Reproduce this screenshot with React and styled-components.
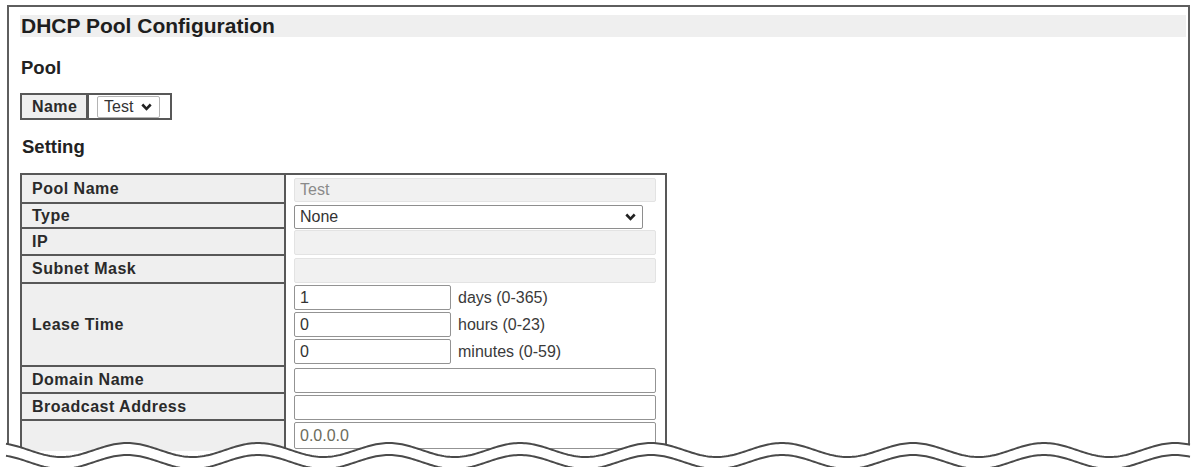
import React from 'react';
import styled, { createGlobalStyle } from 'styled-components';

const GlobalStyle = createGlobalStyle`
  html, body {
    margin: 0;
    padding: 0;
    height: 467px;
    overflow: hidden;
    background: #fff;
  }
  body {
    font-family: "Liberation Sans", Arial, sans-serif;
    color: #2a2a2a;
  }
`;

const palette = {
  line: '#585858',
  shade: '#efefef',
  text: '#2a2a2a',
};

const Page = styled.div`
  position: relative;
  height: 467px;
  overflow: hidden;
`;

const Frame = styled.div`
  box-sizing: border-box;
  width: 1183px;
  height: 480px;
  margin: 5px 0 0 7px;
  border: 2px solid #5e5e5e;
  padding: 8px 2px 0 11px;
`;

const TitleBar = styled.div`
  height: 22px;
  line-height: 22px;
  background: ${palette.shade};
  font-size: 21px;
  font-weight: bold;
  color: #1e1e1e;
  padding-left: 1px;
`;

const Heading = styled.div`
  margin-top: ${p => p.$top}px;
  font-size: 18.5px;
  line-height: 24px;
  font-weight: bold;
  color: #222;
  padding-left: ${p => p.$indent || 1}px;
`;

const NameTable = styled.div`
  display: inline-flex;
  box-sizing: border-box;
  height: 27px;
  margin-top: 13px;
  border: 2px solid ${palette.line};
`;

const NameLabel = styled.div`
  display: flex;
  align-items: center;
  width: 67px;
  box-sizing: border-box;
  padding-left: 10px;
  background: ${palette.shade};
  border-right: 3px solid ${palette.line};
  font-size: 16px;
  font-weight: bold;
  letter-spacing: 0.4px;
`;

const NameValue = styled.div`
  display: flex;
  align-items: center;
  padding: 0 10px 0 8px;
  background: #fff;
`;

const SelectWrap = styled.div`
  position: relative;
  width: ${p => p.$w}px;
  height: ${p => p.$h}px;
`;

const NativeSelect = styled.select`
  appearance: none;
  -webkit-appearance: none;
  box-sizing: border-box;
  width: 100%;
  height: 100%;
  margin: 0;
  padding: 0 0 0 ${p => p.$pad}px;
  border: 1px solid ${p => p.$border};
  border-radius: 2px;
  background: #fff;
  font-family: "Liberation Sans", Arial, sans-serif;
  font-size: 16px;
  color: #333;
  outline: none;
`;

const Chevron = styled.svg`
  position: absolute;
  right: ${p => p.$right}px;
  top: 50%;
  transform: translateY(-50%);
  pointer-events: none;
`;

const SettingTable = styled.div`
  box-sizing: border-box;
  width: 647px;
  margin-top: 14px;
  border: 2px solid ${palette.line};
  border-bottom: none;
`;

const Row = styled.div`
  display: flex;
  height: ${p => p.$h}px;
`;

const Label = styled.div`
  display: flex;
  align-items: center;
  box-sizing: border-box;
  width: 264px;
  padding-left: 10px;
  background: ${palette.shade};
  border-right: 2px solid ${palette.line};
  border-bottom: ${p => (p.$last ? 'none' : `2px solid ${palette.line}`)};
  font-size: 16px;
  font-weight: bold;
  letter-spacing: 0.5px;
  color: ${palette.text};
`;

const Value = styled.div`
  flex: 1;
  display: flex;
  flex-direction: column;
  justify-content: ${p => (p.$top ? 'flex-start' : 'center')};
  gap: 2px;
  padding: ${p => (p.$top ? '1px' : '0')} 9px 0 8px;
`;

const Line = styled.div`
  display: flex;
  align-items: center;
`;

const Field = styled.input`
  box-sizing: border-box;
  width: ${p => (p.$w ? `${p.$w}px` : '100%')};
  height: ${p => p.$h || 25}px;
  margin: 0;
  padding: 0 5px;
  border: 1px solid #939393;
  border-radius: 2px;
  background: #fff;
  font-family: "Liberation Sans", Arial, sans-serif;
  font-size: 16px;
  color: ${p => p.$color || '#333'};
  outline: none;

  &:disabled {
    background: #f1f1f1;
    border-color: #e3e3e3;
    color: #8a8a8a;
  }
`;

const Unit = styled.span`
  margin-left: 7px;
  font-size: 16px;
  color: #3a3a3a;
`;

const Wave = styled.svg`
  position: absolute;
  left: 0;
  top: 436px;
`;

function Select({ w, h, pad, border, right, value }) {
  return (
    <SelectWrap $w={w} $h={h}>
      <NativeSelect $pad={pad} $border={border} defaultValue={value}>
        <option>{value}</option>
      </NativeSelect>
      <Chevron $right={right} width="11" height="8" viewBox="0 0 11 8">
        <path d="M1.3 1.5 L5.5 5.8 L9.7 1.5" fill="none" stroke="#222" strokeWidth="2.6" />
      </Chevron>
    </SelectWrap>
  );
}

function waveLine(offset, x0, x1) {
  const pts = [];
  for (let x = x0; x <= x1; x += 2) {
    const y = offset - 7 * Math.cos((2 * Math.PI * (x - 127)) / 131);
    pts.push(`${x},${y.toFixed(2)}`);
  }
  return pts;
}

function BreakLine() {
  const top = waveLine(14, 6, 1190);
  const second = waveLine(26, 6, 1190);
  const fill = `M0,${top[0].split(',')[1]} L${top.join(' L')} L1195,${top[top.length - 1].split(',')[1]} L1195,40 L0,40 Z`;
  return (
    <Wave width="1195" height="31" viewBox="0 0 1195 31">
      <path d={fill} fill="#fff" />
      <polyline points={top.join(' ')} fill="none" stroke="#4a4a4a" strokeWidth="2" />
      <polyline points={second.join(' ')} fill="none" stroke="#4a4a4a" strokeWidth="2" />
    </Wave>
  );
}

export default function App() {
  return (
    <Page>
      <GlobalStyle />
      <Frame>
        <TitleBar>DHCP Pool Configuration</TitleBar>
        <Heading $top={19}>Pool</Heading>
        <NameTable>
          <NameLabel>Name</NameLabel>
          <NameValue>
            <Select w={63} h={22} pad={6} border="#b4b4b4" right={8} value="Test" />
          </NameValue>
        </NameTable>
        <Heading $top={15} $indent={2}>Setting</Heading>
        <SettingTable>
          <Row $h={29}>
            <Label>Pool Name</Label>
            <Value>
              <Field disabled defaultValue="Test" $h={24} />
            </Value>
          </Row>
          <Row $h={25}>
            <Label>Type</Label>
            <Value>
              <Select w={349} h={24} pad={5} border="#8e8e8e" right={7} value="None" />
            </Value>
          </Row>
          <Row $h={27}>
            <Label>IP</Label>
            <Value>
              <Field disabled $h={25} />
            </Value>
          </Row>
          <Row $h={28}>
            <Label>Subnet Mask</Label>
            <Value>
              <Field disabled $h={25} />
            </Value>
          </Row>
          <Row $h={83}>
            <Label>Lease Time</Label>
            <Value $top>
              <Line>
                <Field readOnly defaultValue="1" $w={157} />
                <Unit>days (0-365)</Unit>
              </Line>
              <Line>
                <Field readOnly defaultValue="0" $w={157} />
                <Unit>hours (0-23)</Unit>
              </Line>
              <Line>
                <Field readOnly defaultValue="0" $w={157} />
                <Unit>minutes (0-59)</Unit>
              </Line>
            </Value>
          </Row>
          <Row $h={27}>
            <Label>Domain Name</Label>
            <Value>
              <Field readOnly defaultValue="" />
            </Value>
          </Row>
          <Row $h={27}>
            <Label>Broadcast Address</Label>
            <Value>
              <Field readOnly defaultValue="" />
            </Value>
          </Row>
          <Row $h={30}>
            <Label $last />
            <Value $top>
              <Field readOnly defaultValue="0.0.0.0" $h={27} $color="#6c6c5c" />
            </Value>
          </Row>
        </SettingTable>
      </Frame>
      <BreakLine />
    </Page>
  );
}
